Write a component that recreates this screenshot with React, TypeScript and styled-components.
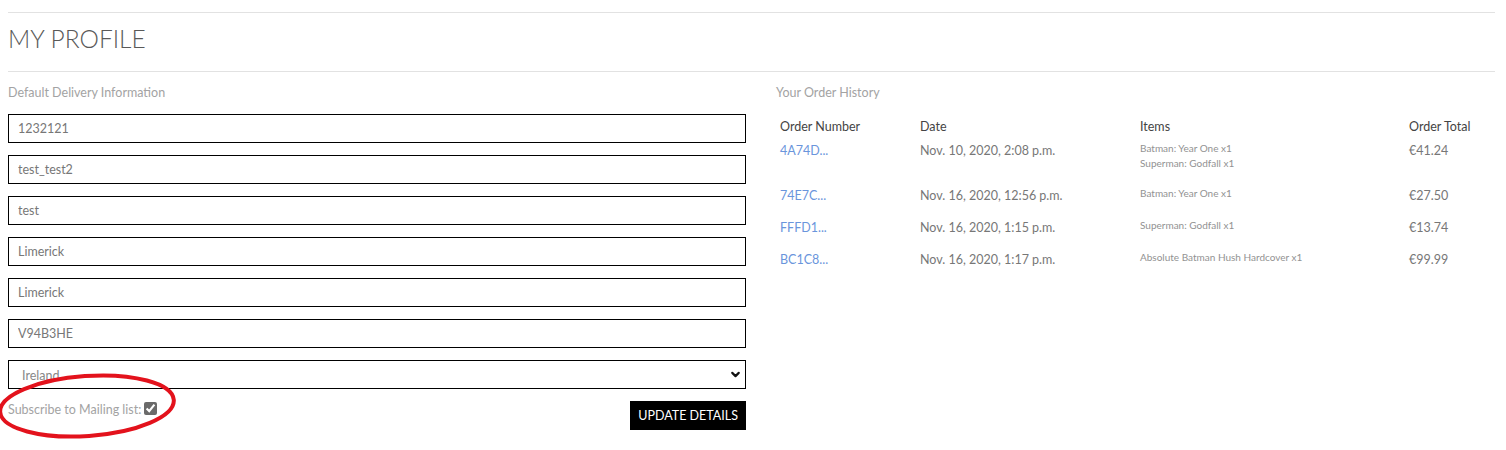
import React from "react";
import styled, { createGlobalStyle } from "styled-components";
import { ChevronDown } from "lucide-react";

const GlobalStyle = createGlobalStyle`
  body {
    margin: 0;
    background: #fff;
    font-family: Lato, "Open Sans", Arial, sans-serif;
  }
`;

interface Order {
  number: string;
  date: string;
  items: string[];
  total: string;
}

const orders: Order[] = [
  { number: "4A74D...", date: "Nov. 10, 2020, 2:08 p.m.", items: ["Batman: Year One x1", "Superman: Godfall x1"], total: "€41.24" },
  { number: "74E7C...", date: "Nov. 16, 2020, 12:56 p.m.", items: ["Batman: Year One x1"], total: "€27.50" },
  { number: "FFFD1...", date: "Nov. 16, 2020, 1:15 p.m.", items: ["Superman: Godfall x1"], total: "€13.74" },
  { number: "BC1C8...", date: "Nov. 16, 2020, 1:17 p.m.", items: ["Absolute Batman Hush Hardcover x1"], total: "€99.99" },
];

const fields = ["1232121", "test_test2", "test", "Limerick", "Limerick", "V94B3HE"];

export default function App() {
  return (
    <>
      <GlobalStyle />
      <Page>
        <Rule />
        <Title>MY PROFILE</Title>
        <Rule $gap={16} />
        <Columns>
          <div>
            <SectionLabel>Default Delivery Information</SectionLabel>
            <Form onSubmit={(e) => e.preventDefault()}>
              {fields.map((v, i) => (
                <Field key={i} defaultValue={v} />
              ))}
              <SelectWrap>
                <Select defaultValue="IE">
                  <option value="IE">Ireland</option>
                </Select>
                <ChevronDown size={13} strokeWidth={4} />
              </SelectWrap>
              <FormFooter>
                <Subscribe>
                  Subscribe to Mailing list:
                  <Check type="checkbox" defaultChecked />
                </Subscribe>
                <UpdateButton type="submit">UPDATE DETAILS</UpdateButton>
              </FormFooter>
            </Form>
          </div>
          <div>
            <SectionLabel>Your Order History</SectionLabel>
            <OrderTable>
              <colgroup>
                <col style={{ width: 140 }} />
                <col style={{ width: 220 }} />
                <col style={{ width: 269 }} />
                <col />
              </colgroup>
              <thead>
                <tr>
                  <Th>Order Number</Th>
                  <Th>Date</Th>
                  <Th>Items</Th>
                  <Th>Order Total</Th>
                </tr>
              </thead>
              <tbody>
                {orders.map((o) => (
                  <tr key={o.number}>
                    <Td>
                      <OrderLink href="#">{o.number}</OrderLink>
                    </Td>
                    <Td>{o.date}</Td>
                    <Td>
                      <ItemList>
                        {o.items.map((it) => (
                          <Item key={it}>{it}</Item>
                        ))}
                      </ItemList>
                    </Td>
                    <Td>{o.total}</Td>
                  </tr>
                ))}
              </tbody>
            </OrderTable>
          </div>
        </Columns>
        <Annotation width="190" height="80" viewBox="0 0 190 80">
          <ellipse
            cx="88"
            cy="38"
            rx="87"
            ry="30"
            transform="rotate(-4 88 38)"
            fill="none"
            stroke="#e3121c"
            strokeWidth="4"
          />
        </Annotation>
      </Page>
    </>
  );
}

const Page = styled.div`
  position: relative;
  padding: 12px 11px 20px 8px;
`;

const Rule = styled.div<{ $gap?: number }>`
  border-top: 1px solid #e2e2e2;
  margin-top: ${(p) => p.$gap ?? 0}px;
`;

const Title = styled.h2`
  margin: 10px 0 0;
  font-size: 24.5px;
  line-height: 32px;
  font-weight: 300;
  color: #595959;
`;

const Columns = styled.div`
  display: grid;
  grid-template-columns: 738px 1fr;
  gap: 30px;
`;

const SectionLabel = styled.h5`
  margin: 12px 0 12px;
  font-size: 12.5px;
  line-height: 18px;
  font-weight: 400;
  color: #a3a3a3;
`;

const Form = styled.form`
  display: flex;
  flex-direction: column;
  gap: 12px;
`;

const Field = styled.input`
  box-sizing: border-box;
  height: 29px;
  width: 100%;
  border: 1px solid #000;
  border-radius: 0;
  padding: 0 9px;
  font-family: inherit;
  font-size: 12.5px;
  color: #777;
  outline: none;
`;

const SelectWrap = styled.div`
  position: relative;

  svg {
    position: absolute;
    right: 4px;
    top: 8px;
    color: #111;
    pointer-events: none;
  }
`;

const Select = styled.select`
  box-sizing: border-box;
  appearance: none;
  height: 29px;
  width: 100%;
  border: 1px solid #000;
  border-radius: 0;
  background: #fff;
  padding: 2px 13px 0;
  font-family: inherit;
  font-size: 12.5px;
  color: #888;
  outline: none;
`;

const FormFooter = styled.div`
  display: flex;
  justify-content: space-between;
  align-items: flex-start;
`;

const Subscribe = styled.label`
  display: flex;
  align-items: center;
  gap: 3px;
  margin-top: 1px;
  font-size: 12.5px;
  color: #a3a3a3;
`;

const Check = styled.input`
  width: 13px;
  height: 13px;
  margin: 0 0 2px;
  accent-color: #6a6a6a;
`;

const UpdateButton = styled.button`
  height: 29px;
  padding: 0 8px;
  border: 0;
  border-radius: 0;
  background: #000;
  color: #fff;
  font-family: inherit;
  font-size: 12.5px;
`;

const OrderTable = styled.table`
  width: 100%;
  border-collapse: collapse;
  table-layout: fixed;
`;

const Th = styled.th`
  text-align: left;
  padding: 3px 4px 2px;
  font-size: 12.5px;
  line-height: 20px;
  font-weight: 400;
  color: #444;
`;

const Td = styled.td`
  vertical-align: top;
  padding: 2px 4px 10px;
  font-size: 12.5px;
  line-height: 20px;
  color: #777;
`;

const OrderLink = styled.a`
  color: #6a95dc;
  text-decoration: none;
`;

const ItemList = styled.div`
  padding-bottom: 3px;
`;

const Item = styled.p`
  margin: 0;
  font-size: 10px;
  line-height: 15px;
  color: #929292;
`;

const Annotation = styled.svg`
  position: absolute;
  left: -1px;
  top: 368px;
  pointer-events: none;
`;
